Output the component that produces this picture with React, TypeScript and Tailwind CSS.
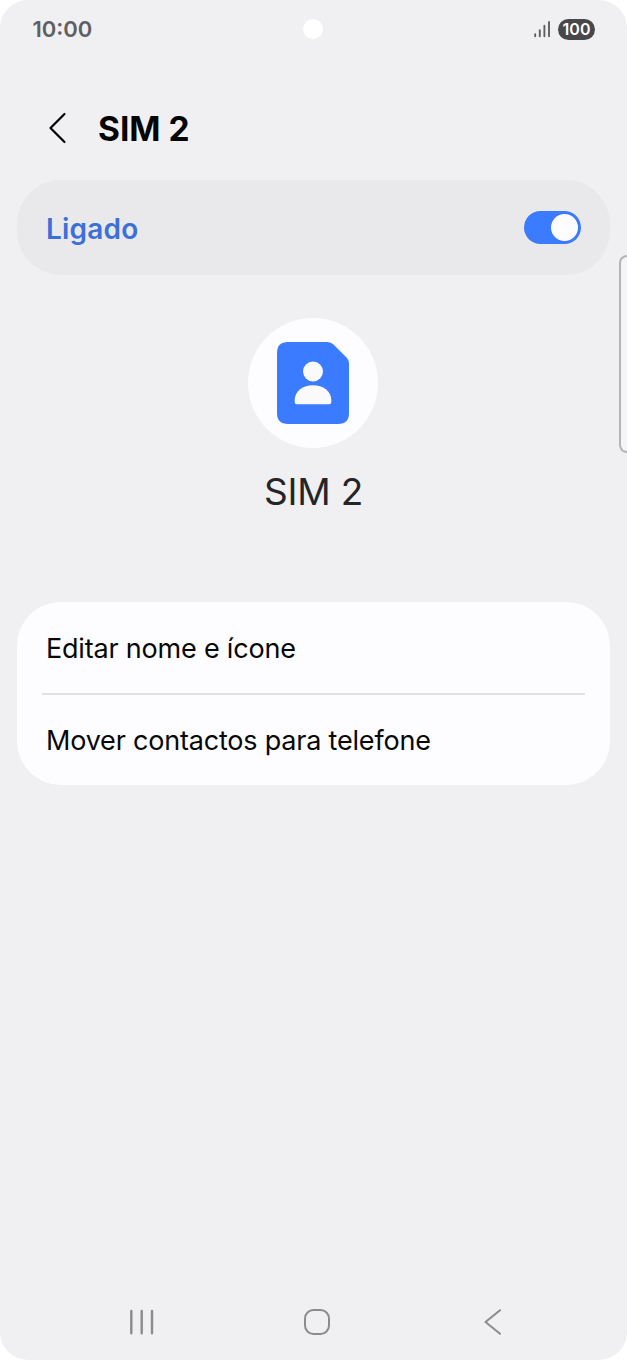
const actions = ['Editar nome e ícone', 'Mover contactos para telefone'];

function SignalIcon() {
  return (
    <svg width="17" height="18" viewBox="0 0 17 18" stroke="#5f5f61" strokeWidth="1.9" strokeLinecap="round">
      <path d="M1.2 14.3v1.9M5.8 10.2v6M10.4 5.7v10.5M15 2v14.2" />
    </svg>
  );
}

function StatusBar() {
  return (
    <header className="flex h-[58px] items-center pr-8 pl-[31px]">
      <div className="flex-1 pl-[1.5px] text-[22px] leading-[58px] font-semibold text-[#5f5f61]">10:00</div>
      <div className="mr-px size-5 rounded-full bg-white" />
      <div className="flex flex-1 items-center justify-end gap-[7px]">
        <SignalIcon />
        <span className="flex h-[21px] w-[37px] items-center justify-center rounded-full bg-[#48484a] text-[16px] font-semibold text-white">
          100
        </span>
      </div>
    </header>
  );
}

function SimIcon() {
  return (
    <svg width="72" height="82" viewBox="0 0 72 82">
      <path
        fill="#3b7bff"
        d="M11 0H50.5Q54 0 56.5 2.5L69.5 15.5Q72 18 72 21V71Q72 82 61 82H11Q0 82 0 71V11Q0 0 11 0Z"
      />
      <circle cx="36" cy="29.5" r="10" fill="#fafafa" />
      <path fill="#fafafa" d="M17.7 58.2C17.7 49 26 43.2 36 43.2S54.3 49 54.3 58.2V60Q54.3 62.200 52.1 62.200H19.9Q17.7 62.200 17.7 60Z" />
    </svg>
  );
}

function NavBar() {
  return (
    <nav className="mt-auto flex h-[76px] items-center pl-[129px]">
      <svg width="26" height="26" viewBox="0 0 26 26" stroke="#8b8b8d" strokeWidth="2.4" strokeLinecap="round">
        <path d="M2.3 2v22.2M12.7 2v22.2M23 2v22.2" />
      </svg>
      <svg className="ml-[149px]" width="26" height="26" viewBox="0 0 26 26" fill="none" stroke="#8b8b8d" strokeWidth="2">
        <rect x="1" y="1" width="24" height="24" rx="8.5" />
      </svg>
      <svg className="ml-[154px]" width="18" height="26" viewBox="0 0 18 26" fill="none" stroke="#8b8b8d" strokeWidth="2" strokeLinecap="round" strokeLinejoin="round">
        <path d="M16 1.2 1.5 13 16 24.8" />
      </svg>
    </nav>
  );
}

export default function App() {
  return (
    <div className="h-[1360px] w-[627px] bg-white font-['Inter',sans-serif]">
      <div className="relative flex h-full flex-col overflow-hidden rounded-[28px] bg-[#f0f0f2]">
        <StatusBar />

        <div className="flex h-[122px] items-center gap-[31px] pt-[18px] pl-12">
          <svg width="19" height="32" viewBox="0 0 19 32" fill="none" stroke="#050505" strokeWidth="2.2" strokeLinecap="round" strokeLinejoin="round">
            <path d="M16.5 2 2.5 16 16.5 30" />
          </svg>
          <h1 className="pt-px text-[33.5px] leading-10 font-bold text-[#050505]">SIM 2</h1>
        </div>

        <main className="px-[17px]">
          <section className="flex h-[95px] items-center justify-between rounded-[44px] bg-[#e9e9eb] px-[29px]">
            <span className="pt-0.5 text-[28px] font-semibold tracking-[0.2px] text-[#3d70d6]">Ligado</span>
            <button
              role="switch"
              aria-checked="true"
              aria-label="SIM 2"
              className="flex h-[33px] w-[57px] items-center justify-end rounded-full bg-[#3b7bff] pr-[3px]"
            >
              <span className="size-[27px] rounded-full bg-[#fdfdff]" />
            </button>
          </section>

          <section className="flex h-[327px] flex-col items-center pt-[43px]">
            <div className="mr-px flex size-[130px] items-center justify-center rounded-full bg-[#fdfdff]">
              <SimIcon />
            </div>
            <p className="mt-[21px] text-[37px] leading-[46px] tracking-[-0.2px] text-[#252527]">SIM 2</p>
          </section>

          <section className="rounded-[44px] bg-[#fdfdff] px-[25px]">
            {actions.map((action) => (
              <button
                key={action}
                className="flex h-[93px] w-full items-center border-[#e2e2e4] pt-0.5 pl-1 text-left text-[27px] tracking-[-0.2px] text-[#080808] not-last:border-b-2 not-last:pt-1 last:h-[90px]"
              >
                {action}
              </button>
            ))}
          </section>
        </main>

        <NavBar />

        <div className="absolute top-[255px] right-0 h-[198px] w-2 rounded-l-[8px] border-2 border-r-0 border-[#b5b5b7] bg-[#f5f5f7]" />
      </div>
    </div>
  );
}
